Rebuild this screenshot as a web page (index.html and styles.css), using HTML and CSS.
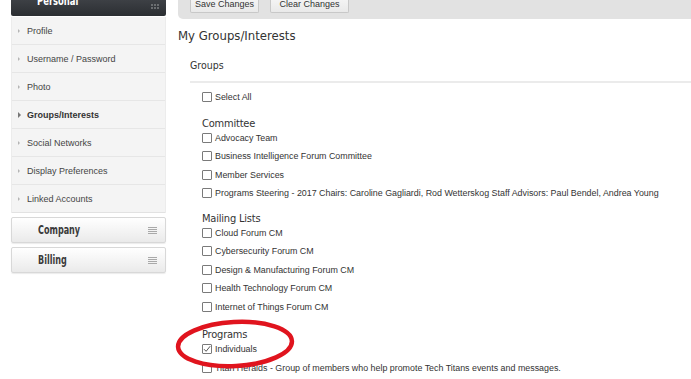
FILE: index.html
```html
<!DOCTYPE html>
<html>
<head>
<meta charset="utf-8">
<link rel="stylesheet" href="styles.css">
</head>
<body>
<div class="page">
  <aside class="sidebar">
    <div class="side-head">
      <span class="side-head-title">Personal</span>
      <svg class="grid-icon" width="9" height="6" viewBox="0 0 9 6"><g fill="#6a6d70"><rect x="0" y="0" width="2" height="2"/><rect x="3" y="0" width="2" height="2"/><rect x="6" y="0" width="2" height="2"/><rect x="0" y="3" width="2" height="2"/><rect x="3" y="3" width="2" height="2"/><rect x="6" y="3" width="2" height="2"/></g></svg>
    </div>
    <ul class="side-menu">
      <li class="side-item"><span class="arrow"></span>Profile</li>
      <li class="side-item"><span class="arrow"></span>Username / Password</li>
      <li class="side-item"><span class="arrow"></span>Photo</li>
      <li class="side-item active"><span class="arrow"></span>Groups/Interests</li>
      <li class="side-item"><span class="arrow"></span>Social Networks</li>
      <li class="side-item"><span class="arrow"></span>Display Preferences</li>
      <li class="side-item"><span class="arrow"></span>Linked Accounts</li>
    </ul>
    <div class="side-box">
      <span class="side-box-title">Company</span>
      <span class="burger"><i></i><i></i><i></i><i></i></span>
    </div>
    <div class="side-box">
      <span class="side-box-title">Billing</span>
      <span class="burger"><i></i><i></i><i></i><i></i></span>
    </div>
  </aside>

  <main class="main">
    <div class="toolbar">
      <button class="btn btn-save">Save Changes</button>
      <button class="btn btn-clear">Clear Changes</button>
    </div>
    <h1 class="page-title">My Groups/Interests</h1>
    <section class="panel">
      <h2 class="panel-title">Groups</h2>
      <div class="panel-body">
        <label class="row select-all"><span class="cb"></span>Select All</label>

        <div class="group">
          <h3 class="group-title">Committee</h3>
          <label class="row"><span class="cb"></span>Advocacy Team</label>
          <label class="row"><span class="cb"></span>Business Intelligence Forum Committee</label>
          <label class="row"><span class="cb"></span>Member Services</label>
          <label class="row"><span class="cb"></span>Programs Steering - 2017 Chairs: Caroline Gagliardi, Rod Wetterskog Staff Advisors: Paul Bendel, Andrea Young</label>
        </div>

        <div class="group">
          <h3 class="group-title">Mailing Lists</h3>
          <label class="row"><span class="cb"></span>Cloud Forum CM</label>
          <label class="row"><span class="cb"></span>Cybersecurity Forum CM</label>
          <label class="row"><span class="cb"></span>Design &amp; Manufacturing Forum CM</label>
          <label class="row"><span class="cb"></span>Health Technology Forum CM</label>
          <label class="row"><span class="cb"></span>Internet of Things Forum CM</label>
        </div>

        <div class="group group-programs">
          <h3 class="group-title">Programs</h3>
          <label class="row"><span class="cb checked"><svg width="8" height="8" viewBox="0 0 8 8"><path d="M1 4.2 L3.1 6.3 L7.2 1.2" fill="none" stroke="#555" stroke-width="1"/></svg></span>Individuals</label>
          <label class="row"><span class="cb"></span>Titan Heralds - Group of members who help promote Tech Titans events and messages.</label>
          <svg class="circle-mark" width="126" height="56" viewBox="0 0 126 56"><ellipse cx="61" cy="27" rx="57" ry="22" fill="none" stroke="#e0141e" stroke-width="4.5" transform="rotate(-3 61 27)"/></svg>
        </div>
      </div>
    </section>
  </main>
</div>
</body>
</html>
```

FILE: styles.css
```css
* { box-sizing: border-box; }
html, body { margin: 0; padding: 0; background: #fff; }
body {
  font-family: "Liberation Sans", Arial, sans-serif;
  color: #333;
  overflow: hidden;
}
.page {
  display: flex;
  align-items: flex-start;
  width: 691px;
  height: 379px;
}

/* Sidebar */
.sidebar {
  width: 155px;
  margin-left: 11px;
  flex: none;
}
.side-head {
  height: 16px;
  background: linear-gradient(#3d4045, #2b2e32);
  border-radius: 0 0 2px 2px;
  display: flex;
  align-items: flex-end;
  justify-content: space-between;
  padding: 0 6px 9px 26px;
  overflow: hidden;
}
.side-head-title {
  font-family: "DejaVu Sans Condensed", "Liberation Sans", sans-serif;
  font-weight: bold;
  color: #fff;
  font-size: 12px;
  line-height: 12px;
  display: inline-block;
  transform: scaleX(0.78);
  transform-origin: left center;
}
.grid-icon { margin-bottom: -3px; }
.side-menu {
  list-style: none;
  margin: 1px 0 0;
  padding: 0;
  background: #f4f4f4;
  border-left: 1px solid #ececec;
  border-right: 1px solid #ececec;
}
.side-item {
  height: 28px;
  display: flex;
  align-items: center;
  font-size: 9px;
  color: #444;
  border-bottom: 1px solid #e6e6e6;
  padding-left: 6px;
}
.side-item:last-child { border-bottom: 1px solid #e2e2e2; }
.arrow {
  width: 0; height: 0;
  border-left: 2px solid #b5b5b5;
  border-top: 2px solid transparent;
  border-bottom: 2px solid transparent;
  margin-right: 7px;
}
.side-item.active { font-weight: bold; color: #333; }
.side-item.active .arrow {
  border-left: 3px solid #777;
  border-top: 3px solid transparent;
  border-bottom: 3px solid transparent;
  margin-right: 6px;
}
.side-box {
  margin-top: 4px;
  height: 26px;
  border: 1px solid #d8d8d8;
  border-radius: 2px;
  background: linear-gradient(#ffffff, #eaeaea);
  box-shadow: 0 1px 1px rgba(0,0,0,0.08);
  display: flex;
  align-items: center;
  justify-content: space-between;
  padding: 0 8px 0 26px;
}
.side-box-title {
  font-family: "DejaVu Sans Condensed", "Liberation Sans", sans-serif;
  font-weight: bold;
  font-size: 11.5px;
  color: #3a3a3a;
  display: inline-block;
  transform: scaleX(0.78);
  transform-origin: left center;
}
.burger {
  display: flex;
  flex-direction: column;
  gap: 1px;
  width: 9px;
}
.burger i {
  display: block;
  height: 1px;
  background: #a9a9a9;
}

/* Main */
.main {
  flex: 1;
  margin-left: 12px;
  min-width: 0;
}
.toolbar {
  height: 19px;
  background: #e2e2e2;
  border-bottom-left-radius: 5px;
  display: flex;
  align-items: flex-end;
  gap: 11px;
  padding: 0 0 6px 12px;
}
.btn {
  font-family: "Liberation Sans", Arial, sans-serif;
  font-size: 9px;
  color: #333;
  height: 16px;
  margin-top: -3px;
  border: 1px solid #c8c8c8;
  border-top: none;
  border-radius: 0 0 2px 2px;
  background: linear-gradient(#f6f6f6, #e9e9e9);
  display: flex;
  align-items: flex-end;
  justify-content: center;
  padding: 0 0 3px;
}
.btn-save { width: 69px; }
.btn-clear { width: 79px; }

.page-title {
  font-family: "DejaVu Sans Condensed", "Liberation Sans", sans-serif;
  font-weight: normal;
  font-size: 13px;
  color: #333;
  margin: 8px 0 0;
  line-height: 17px;
}
.panel { padding-left: 12px; }
.panel-title {
  font-family: "DejaVu Sans Condensed", "Liberation Sans", sans-serif;
  font-weight: normal;
  font-size: 10.5px;
  color: #333;
  margin: 14px 0 0;
  line-height: 14px;
  padding-bottom: 9px;
  border-bottom: 2px solid #ebebeb;
}
.panel-body { padding-left: 12px; padding-top: 5px; }
.row {
  display: flex;
  align-items: center;
  height: 18.5px;
  font-size: 8.9px;
  color: #333;
  white-space: nowrap;
}
.cb {
  width: 10px;
  height: 10px;
  border: 1px solid #7a7a7a;
  border-radius: 1px;
  background: #fff;
  margin-right: 3px;
  flex: none;
  display: flex;
  align-items: center;
  justify-content: center;
}
.group { margin-top: 11px; }
.group-title {
  font-family: "DejaVu Sans Condensed", "Liberation Sans", sans-serif;
  font-weight: normal;
  font-size: 11px;
  letter-spacing: -0.2px;
  color: #333;
  margin: 0 0 -1px;
  line-height: 12px;
}
.group + .group { margin-top: 10px; }
.group-programs { position: relative; margin-top: 13px !important; }
.circle-mark {
  position: absolute;
  left: -28px;
  top: -12px;
  pointer-events: none;
}
```
